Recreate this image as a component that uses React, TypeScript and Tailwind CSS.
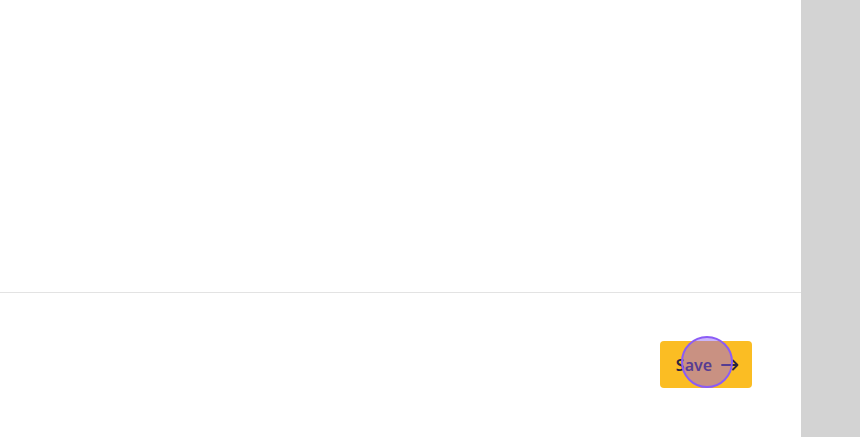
import React from "react";

export default function App() {
  return (
    <div className="flex h-[437px] w-[860px] overflow-hidden bg-white font-['Noto_Sans',sans-serif]">
      <div className="flex flex-1 flex-col">
        <div className="h-[292px] bg-white" />
        <div className="flex flex-1 items-center justify-end border-t border-[#e3e3e3] bg-white pb-[2px] pr-[49px]">
          <div className="relative">
            <button className="flex h-[47px] w-[92px] items-center justify-center gap-[9px] rounded-[4px] bg-[#fbbd23] pl-[3px] pt-[2px] text-[16px] font-semibold text-[#2a2340]">
              <span>Save</span>
              <svg width="18" height="12" viewBox="0 0 18 12" fill="none" stroke="#2a2340" strokeWidth="1.8" strokeLinecap="round" strokeLinejoin="round">
                <path d="M1 6h15.5M12 1.5L16.5 6 12 10.5" />
              </svg>
            </button>
            <div className="pointer-events-none absolute left-[21px] top-[-5px] h-[52px] w-[52px] rounded-full border-2 border-[#8b5cf6] bg-[#8b5cf6]/45" />
          </div>
        </div>
      </div>
      <div className="w-[59px] bg-[#d3d3d3]" />
    </div>
  );
}
